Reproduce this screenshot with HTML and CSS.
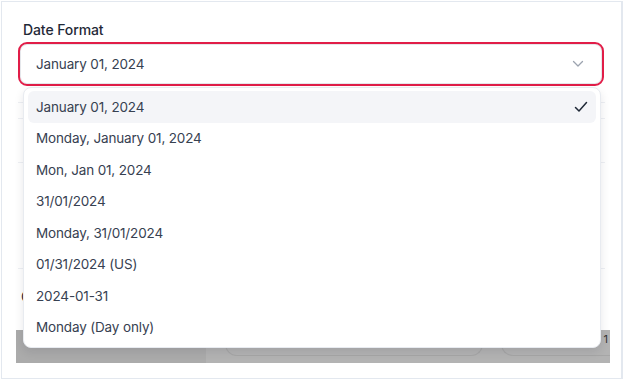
FILE: index.html
```html
<!DOCTYPE html>
<html lang="en">
<head>
  <meta charset="UTF-8">
  <title>Date Format</title>
  <link rel="stylesheet" href="styles.css">
</head>
<body>

  <div class="frame">
    <div class="panel">
      <div class="field">
        <div class="field-label">Date Format</div>
        <div class="select">
          <span class="select-value">January 01, 2024</span>
          <svg class="chevron" width="12" height="8" viewBox="0 0 12 8">
            <polyline points="1.5,1.5 6,6 10.5,1.5" fill="none" stroke="#9ca3af" stroke-width="1.3" stroke-linecap="round" stroke-linejoin="round"/>
          </svg>
        </div>

        <div class="menu">
          <div class="option selected">
            <span>January 01, 2024</span>
            <svg width="14" height="12" viewBox="0 0 14 12">
              <polyline points="1.5,6.5 5,10 12.5,1.5" fill="none" stroke="#1f2937" stroke-width="1.5" stroke-linecap="round" stroke-linejoin="round"/>
            </svg>
          </div>
          <div class="option"><span>Monday, January 01, 2024</span></div>
          <div class="option"><span>Mon, Jan 01, 2024</span></div>
          <div class="option"><span>31/01/2024</span></div>
          <div class="option"><span>Monday, 31/01/2024</span></div>
          <div class="option"><span>01/31/2024 (US)</span></div>
          <div class="option"><span>2024-01-31</span></div>
          <div class="option"><span>Monday (Day only)</span></div>
        </div>
      </div>

      <!-- content behind the open menu -->
      <div class="rows">
        <div class="row row-a"></div>
        <div class="row row-b"></div>
        <div class="row row-c"></div>
        <div class="row row-d"></div>
      </div>
      <div class="currency"><span>C</span></div>
      <div class="overlay-bar">
        <div class="bar-left"></div>
        <div class="bar-right">
          <div class="pill pill-wide"></div>
          <div class="pill pill-end"></div>
        </div>
        <span class="bar-num">1</span>
      </div>
    </div>
  </div>

</body>
</html>
```

FILE: styles.css
```css
* {
  box-sizing: border-box;
}

body {
  margin: 0;
  font-family: Inter, "Noto Sans", sans-serif;
  background-color: #ffffff;
  color: #1f2937;
}

.frame {
  margin: 1px;
  height: 378px;
  border: 1px solid #e3e8ef;
  border-right-width: 2px;
  overflow: hidden;
}

.panel {
  padding: 0 14px;
}

.field {
  position: relative;
  padding-top: 19px;
}

.field-label {
  padding-left: 7px;
  font-size: 14px;
  font-weight: 500;
  line-height: 18px;
  letter-spacing: -0.1px;
  color: #1f2937;
}

.select {
  margin-top: 3px;
  margin-left: 2px;
  width: 586px;
  height: 44px;
  border: 2px solid #e11d48;
  border-radius: 9px;
  box-shadow: inset 0 0 0 1px #e5e7eb;
  display: flex;
  align-items: center;
  justify-content: space-between;
  padding: 0 18px 0 16px;
}

.select-value {
  font-size: 13.5px;
  letter-spacing: -0.15px;
  color: #374151;
}

.chevron {
  margin-top: -1px;
}

.menu {
  position: absolute;
  top: 85px;
  left: 7px;
  width: 578px;
  padding: 3px 4px 4px 4px;
  background-color: #ffffff;
  border: 1px solid #e8ebf0;
  border-radius: 8px;
  box-shadow: 0 4px 10px rgba(15, 23, 42, 0.10);
  z-index: 10;
}

.option {
  height: 31.5px;
  padding: 0 8px 0 8px;
  display: flex;
  align-items: center;
  justify-content: space-between;
  font-size: 13.5px;
  letter-spacing: -0.15px;
  color: #374151;
  border-radius: 6px;
}

.option.selected {
  background-color: #f4f5f8;
}

.rows {
  margin-top: 16px;
}

.row {
  border-top: 1px solid #eef0f4;
  margin: 0 2px;
}

.row-a { height: 16px; }
.row-b { height: 44px; }
.row-c { height: 106px; }
.row-d { height: 20px; }

.currency {
  padding-left: 5px;
  font-size: 14px;
  line-height: 18px;
  color: #1f2937;
}

.overlay-bar {
  position: relative;
  margin-top: 24px;
  width: 594px;
  height: 33px;
  display: flex;
  background-color: #ababab;
}

.bar-left {
  width: 190px;
}

.bar-right {
  flex: 1;
  display: flex;
  gap: 18px;
  padding-left: 19px;
  background-color: #b3b3b3;
}

.pill {
  height: 26px;
  border: 1px solid #a6a6a6;
  border-top: none;
  border-radius: 0 0 12px 12px;
}

.pill-wide {
  width: 258px;
}

.pill-end {
  flex: 1;
  border-right: none;
  border-radius: 0 0 0 12px;
}

.bar-num {
  position: absolute;
  right: 2px;
  top: 2px;
  font-size: 11px;
  color: #333333;
}
```
